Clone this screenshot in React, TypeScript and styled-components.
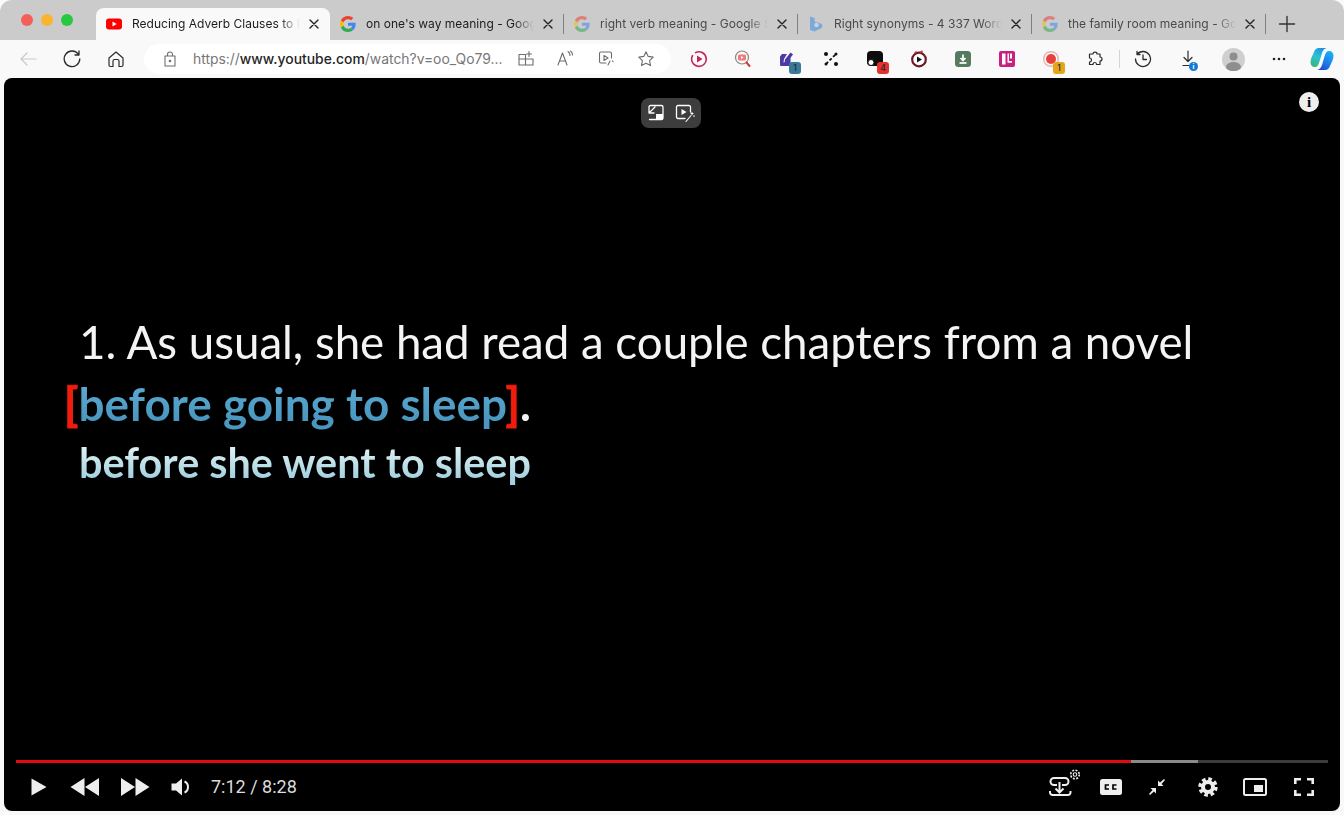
import type { ReactNode } from 'react';
import styled, { createGlobalStyle } from 'styled-components';

const GlobalStyle = createGlobalStyle`
  html, body { margin: 0; padding: 0; background: #fafafa; }
  body { font-family: Inter, "Liberation Sans", sans-serif; overflow: hidden; }
  * { box-sizing: border-box; }
`;

const Window = styled.div`
  width: 1344px;
  height: 815px;
  display: flex;
  flex-direction: column;
  background: #f9f9f9;
  border-radius: 12px 12px 0 0;
  overflow: hidden;
`;

// Tab strip
const TabStrip = styled.div`
  position: relative;
  height: 40px;
  flex: none;
  display: flex;
  align-items: flex-end;
  background: #cbcbcb;
  padding-left: 96px;
`;

const Tab = styled.div<{ $active?: boolean; $sep?: boolean }>`
  position: relative;
  width: 234px;
  height: 32px;
  display: flex;
  align-items: center;
  padding: 0 8px 0 10px;
  border-radius: 8px 8px 0 0;
  background: ${(p) => (p.$active ? '#f9f9f9' : 'transparent')};

  &::after {
    content: '';
    display: ${(p) => (p.$sep ? 'block' : 'none')};
    position: absolute;
    right: 0;
    top: 6px;
    width: 1px;
    height: 20px;
    background: #808080;
  }
`;

const Favicon = styled.span<{ $dim?: boolean }>`
  width: 16px;
  height: 16px;
  flex: none;
  display: flex;
  opacity: ${(p) => (p.$dim ? 0.55 : 1)};
`;

const TabTitle = styled.span<{ $dim?: boolean }>`
  flex: 1;
  min-width: 0;
  margin: 0 6px 0 10px;
  font-size: 12px;
  letter-spacing: 0.02px;
  line-height: 16px;
  white-space: nowrap;
  overflow: hidden;
  color: ${(p) => (p.$dim ? '#4a4a4a' : '#1c1c1c')};
  mask-image: linear-gradient(90deg, #000 88%, transparent 100%);
`;

const TabClose = styled.span`
  width: 16px;
  height: 16px;
  flex: none;
  display: flex;
  align-items: center;
  justify-content: center;
  color: #222;
`;

const NewTab = styled.div`
  width: 42px;
  height: 32px;
  display: flex;
  align-items: center;
  justify-content: center;
  color: #333;
`;

const Lights = styled.div`
  position: absolute;
  left: 21px;
  top: 14px;
  display: flex;
  gap: 8px;
`;

const Light = styled.span<{ $color: string }>`
  width: 12px;
  height: 12px;
  border-radius: 50%;
  background: ${(p) => p.$color};
`;

// Toolbar
const Toolbar = styled.div`
  height: 38px;
  flex: none;
  display: flex;
  align-items: center;
  padding-left: 6px;
  background: #f9f9f9;
`;

const Slot = styled.div<{ $left?: number; $muted?: boolean }>`
  position: relative;
  width: 44px;
  height: 30px;
  flex: none;
  margin-left: ${(p) => p.$left ?? 0}px;
  display: flex;
  align-items: center;
  justify-content: center;
  color: ${(p) => (p.$muted ? '#c9c9c9' : '#2b2b2b')};
`;

const Divider = styled.span`
  width: 1px;
  height: 18px;
  margin: 0 1px 0 2px;
  flex: none;
  background: #d4d4d4;
`;

const UrlPill = styled.div`
  width: 527px;
  height: 30px;
  flex: none;
  margin: 0 6px;
  display: flex;
  align-items: center;
  padding-left: 18px;
  border-radius: 15px;
  background: #fff;
  color: #6d6d6d;
`;

const UrlText = styled.div`
  width: 311px;
  margin-left: 15px;
  font-size: 13.9px;
  line-height: 18px;
  white-space: nowrap;
  color: #777;

  b {
    font-weight: 500;
    color: #262626;
  }
`;

const UrlActions = styled.div`
  display: flex;
  margin-left: 2px;
`;

const UrlAction = styled.span`
  width: 40px;
  display: flex;
  justify-content: center;
`;

const Badge = styled.span<{ $bg: string }>`
  position: absolute;
  left: 24px;
  top: 18px;
  width: 12px;
  height: 12px;
  border-radius: 3px;
  background: ${(p) => p.$bg};
  color: #1c2c33;
  font: 500 8.5px/12px Inter, sans-serif;
  text-align: center;
`;

const InfoDot = styled.span`
  position: absolute;
  left: 22px;
  top: 18px;
  width: 9px;
  height: 9px;
  border-radius: 50%;
  background: #1479d6;
  color: #fff;
  font: 700 7px/9px Inter, sans-serif;
  text-align: center;
`;

const Avatar = styled.span`
  width: 23px;
  height: 23px;
  border-radius: 50%;
  overflow: hidden;
  display: flex;
  background: #cfcfcf;
`;

// Player
const Player = styled.div`
  position: relative;
  flex: none;
  width: 1336px;
  height: 733px;
  margin: 0 4px;
  display: flex;
  flex-direction: column;
  border-radius: 8px;
  background: #000;
  overflow: hidden;
`;

const PipPill = styled.div`
  position: absolute;
  left: 637px;
  top: 20px;
  width: 60px;
  height: 30px;
  display: flex;
  align-items: center;
  gap: 10px;
  padding-left: 6px;
  border-radius: 8px;
  background: #3d3d3d;
  color: #fff;
`;

const InfoButton = styled.div`
  position: absolute;
  left: 1295px;
  top: 14px;
  width: 20px;
  height: 20px;
  border-radius: 50%;
  background: #eee;
  color: #000;
  font: 700 15px/20px "Liberation Serif", serif;
  text-align: center;
`;

const Slide = styled.div`
  flex: 1;
  min-height: 0;
  padding: 235px 0 0 60px;
  font-family: Lato, "Open Sans", sans-serif;
  filter: blur(0.35px);
`;

const SlideLine = styled.div`
  padding-left: 15px;
  font-size: 45.65px;
  line-height: 58px;
  color: #f4f4f4;
  white-space: nowrap;
`;

const ClauseLine = styled.div`
  margin-top: 4px;
  font-size: 45.9px;
  line-height: 58px;
  font-weight: 700;
  white-space: nowrap;
  color: #f4f4f4;
`;

const Bracket = styled.span`
  color: #f01c0c;
  -webkit-text-stroke: 1px #f01c0c;
`;

const Clause = styled.span`
  background: linear-gradient(180deg, #5aa9d0 20%, #4a97c0 80%);
  -webkit-background-clip: text;
  background-clip: text;
  color: transparent;
`;

const RewriteLine = styled.div`
  width: 560px;
  margin-top: 3px;
  padding-left: 15px;
  font-size: 41.4px;
  line-height: 52px;
  font-weight: 700;
  white-space: nowrap;
  background: linear-gradient(180deg, #dbeff2 25%, #a5d2e0 80%);
  -webkit-background-clip: text;
  background-clip: text;
  color: transparent;
`;

const Progress = styled.div`
  flex: none;
  height: 3px;
  margin: 0 12px;
  display: flex;
`;

const Segment = styled.span<{ $pct: number; $color: string }>`
  width: ${(p) => p.$pct}%;
  background: ${(p) => p.$color};
`;

const Controls = styled.div`
  flex: none;
  height: 48px;
  padding: 0 12px;
  display: flex;
  align-items: center;
  color: #eee;
`;

const CtrlButton = styled.div<{ $w: number }>`
  width: ${(p) => p.$w}px;
  height: 48px;
  flex: none;
  display: flex;
  align-items: center;
  justify-content: center;
`;

const RaisedIcon = styled.svg`
  margin-top: -8px;
`;

const TimeLabel = styled.span`
  margin-left: 11px;
  flex: 1;
  font: 400 18px/24px Roboto, sans-serif;
  color: #ddd;
`;

function Icon({ w = 20, h = 20, children }: { w?: number; h?: number; children: ReactNode }) {
  return (
    <svg width={w} height={h} viewBox={`0 0 ${w} ${h}`} fill="none" stroke="currentColor" strokeWidth="1.4" strokeLinecap="round" strokeLinejoin="round">
      {children}
    </svg>
  );
}

const GoogleG = () => (
  <svg width="16" height="16" viewBox="0 0 48 48">
    <path fill="#EA4335" d="M24 9.5c3.9 0 6.9 1.6 9.1 3.6l6.8-6.8C35.700 2.500 30.400 0 24 0 14.600 0 6.500 5.400 2.600 13.200l7.900 6.100C12.400 13.600 17.700 9.500 24 9.500z" />
    <path fill="#4285F4" d="M46.900 24.500c0-1.600-.1-3.100-.4-4.500H24v9h12.900c-.6 3-2.200 5.500-4.700 7.200l7.600 5.900c4.400-4.100 7.100-10.200 7.100-17.600z" />
    <path fill="#FBBC05" d="M10.500 28.700c-.5-1.500-.8-3-.8-4.700s.3-3.200.8-4.700l-7.900-6.100C.9 16.500 0 20.100 0 24s.9 7.500 2.600 10.800l7.900-6.100z" />
    <path fill="#34A853" d="M24 48c6.500 0 11.900-2.100 15.800-5.800l-7.600-5.900c-2.100 1.400-4.900 2.300-8.200 2.300-6.300 0-11.600-4.100-13.500-9.800l-7.900 6.100C6.500 42.600 14.600 48 24 48z" />
  </svg>
);

const YouTubeFav = () => (
  <svg width="16" height="16" viewBox="0 0 16 16">
    <rect y="2.500" width="16" height="11" rx="3" fill="#f00" />
    <path d="M6.500 5.500v5l4.200-2.500z" fill="#fff" />
  </svg>
);

const BingFav = () => (
  <svg width="16" height="16" viewBox="0 0 16 16">
    <path d="M2 0.500 6.500 2v3.500l5 1.500c2 .6 3 1.500 3 3 0 1.300-.7 2-1.700 2.600L6.500 15.500 2 14z" fill="#3f8fe6" />
    <circle cx="8.500" cy="9" r="2.200" fill="#cbd9e8" />
  </svg>
);

const Close = () => (
  <Icon w={10} h={10}>
    <path d="M1 1l8 8M9 1l-8 8" />
  </Icon>
);

const tabs = [
  { title: 'Reducing Adverb Clauses to Participle Phrases', icon: <YouTubeFav />, active: true },
  { title: "on one's way meaning - Google Search", icon: <GoogleG />, sep: true },
  { title: 'right verb meaning - Google Search', icon: <GoogleG />, dim: true, sep: true },
  { title: 'Right synonyms - 4 337 Words and Phrases', icon: <BingFav />, dim: true, sep: true },
  { title: 'the family room meaning - Google Search', icon: <GoogleG />, dim: true, sep: true },
];

const extensions: { badge?: string; bg?: string; icon: ReactNode }[] = [
  {
    icon: (
      <svg width="18" height="18" viewBox="0 0 18 18" fill="none">
        <path d="M5.500 2.600a7.300 7.300 0 1 1-3 3" stroke="#c2255c" strokeWidth="1.600" strokeLinecap="round" />
        <path d="M7 5.500v7l5.500-3.500z" fill="#c2255c" />
      </svg>
    ),
  },
  {
    icon: (
      <svg width="18" height="18" viewBox="0 0 18 18" fill="none">
        <circle cx="8" cy="7.500" r="6.500" stroke="#8d8580" strokeWidth="1.200" />
        <rect x="4" y="4.500" width="8" height="6" rx="1.500" fill="#ee7b78" />
        <path d="M7 6v3l2.500-1.500z" fill="#fff" />
        <path d="M12.500 12.500l3 3.500" stroke="#d33a3a" strokeWidth="2" strokeLinecap="round" />
      </svg>
    ),
  },
  {
    badge: '1',
    bg: '#3a7a96',
    icon: (
      <svg width="18" height="18" viewBox="0 0 18 18">
        <path d="M2 6.500 4 4h5L6 9l-.5 3.500 3-1 4-5V15a1 1 0 0 1-1 1H3a1 1 0 0 1-1-1z" fill="#4b3aa6" />
        <path d="M7 9.500l5.500-7 2.500 2-5.500 7-3 1z" fill="#4b3aa6" />
      </svg>
    ),
  },
  {
    icon: (
      <svg width="16" height="16" viewBox="0 0 16 16" fill="none">
        <path d="M3 13 13 3" stroke="#111" strokeWidth="1.800" strokeDasharray="3 2" />
        <circle cx="3" cy="3" r="2" fill="#111" />
        <circle cx="13" cy="13" r="2" fill="#111" />
        <circle cx="13" cy="3" r="1.500" fill="#111" />
        <circle cx="3" cy="13" r="1.500" fill="#111" />
      </svg>
    ),
  },
  {
    badge: '4',
    bg: '#e5302e',
    icon: (
      <svg width="18" height="18" viewBox="0 0 18 18">
        <rect x="1" y="1" width="16" height="15" rx="4" fill="#0c0c0c" />
        <circle cx="5" cy="12.500" r="3" fill="#fff" stroke="#111" />
      </svg>
    ),
  },
  {
    icon: (
      <svg width="18" height="18" viewBox="0 0 18 18" fill="none">
        <circle cx="9" cy="9.500" r="6.800" fill="#fff" stroke="#6d1a24" strokeWidth="2.200" />
        <path d="M4.500 3.500l2-2M10 2.500l2.500-1.500" stroke="#c63a3a" strokeWidth="1.500" />
        <path d="M7 6.500v6l5-3z" fill="#111" />
      </svg>
    ),
  },
  {
    icon: (
      <svg width="16" height="16" viewBox="0 0 16 16" fill="none">
        <rect width="16" height="16" rx="3.500" fill="#557a5e" />
        <path d="M8 3.500v5.500M5.500 7l2.500 2.500L10.500 7" stroke="#fff" strokeWidth="1.700" />
        <path d="M4.500 12h7" stroke="#fff" strokeWidth="1.700" />
      </svg>
    ),
  },
  {
    icon: (
      <svg width="16" height="16" viewBox="0 0 16 16">
        <rect width="16" height="16" rx="2" fill="#c92080" />
        <path d="M3 2.500h3.500v11H3zM8.500 2.500H10v7.500h3v1.800H8.500zM11 2.500h2v5h-2z" fill="#fff" />
      </svg>
    ),
  },
  {
    badge: '1',
    bg: '#e5a51a',
    icon: (
      <svg width="18" height="18" viewBox="0 0 18 18" fill="none">
        <circle cx="9" cy="9" r="7.300" stroke="#e4b4b0" strokeWidth="1.400" />
        <circle cx="9" cy="9" r="5" fill="#e93f3f" />
      </svg>
    ),
  },
];

const AddressIcons = () => (
  <UrlActions>
    <UrlAction>
      <Icon w={16} h={16}>
        <path d="M1 4.500h6.500V15H1zM7.500 9H15v6H7.500zM1 9h6.500M11 1.500v5M8.500 4h5" strokeWidth="1.100" />
      </Icon>
    </UrlAction>
    <UrlAction>
      <Icon w={18} h={16}>
        <path d="M1 15 5.500 3 10 15M2.700 11h5.600M11 1.500c1.500 1 2 2.500 2 4M13.500 1c1.500 1 2 2.500 2 4" strokeWidth="1.100" />
      </Icon>
    </UrlAction>
    <UrlAction>
      <Icon w={17} h={17}>
        <path d="M8 13H3a1.500 1.500 0 0 1-1.500-1.500v-8A1.500 1.500 0 0 1 3 2h9a1.500 1.500 0 0 1 1.500 1.500V8M6 5.500v5l4-2.500zM12 11l-2 4M14.500 11l.5.5" strokeWidth="1.100" />
      </Icon>
    </UrlAction>
    <UrlAction>
      <Icon w={18} h={18}>
        <path d="M9 1.800l2.200 4.600 5 .7-3.600 3.500.9 5L9 13.200l-4.500 2.400.9-5L1.800 7.100l5-.7z" strokeWidth="1.100" />
      </Icon>
    </UrlAction>
  </UrlActions>
);

export default function App() {
  return (
    <>
      <GlobalStyle />
      <Window>
        <TabStrip>
          <Lights>
            <Light $color="#f45f58" />
            <Light $color="#f9b52e" />
            <Light $color="#28c840" />
          </Lights>
          {tabs.map((t) => (
            <Tab key={t.title} $active={t.active} $sep={t.sep}>
              <Favicon $dim={t.dim}>{t.icon}</Favicon>
              <TabTitle $dim={t.dim}>{t.title}</TabTitle>
              <TabClose>
                <Close />
              </TabClose>
            </Tab>
          ))}
          <NewTab>
            <Icon w={18} h={18}>
              <path d="M9 1.500v15M1.500 9h15" />
            </Icon>
          </NewTab>
        </TabStrip>

        <Toolbar>
          <Slot $muted>
            <Icon w={18} h={18}>
              <path d="M17 9H2M8 3 2 9l6 6" strokeWidth="1.200" />
            </Icon>
          </Slot>
          <Slot>
            <Icon w={18} h={18}>
              <path d="M15.500 4.500A7.800 7.800 0 1 0 16.800 9M16 1v4h-4" strokeWidth="1.300" />
            </Icon>
          </Slot>
          <Slot>
            <Icon w={18} h={18}>
              <path d="M2 8 9 2l7 6v7a1.500 1.500 0 0 1-1.500 1.500H12V11a1.500 1.500 0 0 0-1.500-1.500h-3A1.500 1.500 0 0 0 6 11v5.500H3.500A1.500 1.500 0 0 1 2 15z" strokeWidth="1.200" />
            </Icon>
          </Slot>
          <UrlPill>
            <Icon w={16} h={16}>
              <path d="M5.500 5V3.500a2.500 2.500 0 0 1 5 0V5M3 5h10v10H3z" strokeWidth="1.100" />
              <circle cx="8" cy="10" r=".6" fill="currentColor" />
            </Icon>
            <UrlText>
              https://<b>www.youtube.com</b>/watch?v=oo_Qo79...
            </UrlText>
            <AddressIcons />
          </UrlPill>
          {extensions.map((e, i) => (
            <Slot key={i}>
              {e.icon}
              {e.badge && <Badge $bg={e.bg ?? '#333'}>{e.badge}</Badge>}
            </Slot>
          ))}
          <Slot>
            <Icon w={16} h={16}>
              <path d="M8 1.200c1.300 0 2 .8 2 1.800h3v3c1.500 0 2 1 2 2s-.7 2-2 2v3.500H9.500c0-1.300-.5-2-1.500-2s-2 .7-2 2H2.500V11c1.300 0 2-.9 2-2s-.9-2-2-2V3H6c0-1 .7-1.800 2-1.800z" strokeWidth="1.200" />
            </Icon>
          </Slot>
          <Divider />
          <Slot>
            <Icon w={18} h={18}>
              <path d="M3 4.500A7.500 7.500 0 1 1 1.500 9M3 1.500v3h3M9 5v4.500h3.500" strokeWidth="1.300" />
            </Icon>
          </Slot>
          <Slot $left={2}>
            <Icon w={18} h={18}>
              <path d="M8 1v10M4 7.500 8 11.500l4-4M3 15.500h6" strokeWidth="1.200" />
            </Icon>
            <InfoDot>i</InfoDot>
          </Slot>
          <Slot>
            <Avatar>
              <svg width="23" height="23" viewBox="0 0 23 23">
                <circle cx="11.500" cy="8.500" r="4" fill="#8e8e8e" />
                <ellipse cx="11.500" cy="19" rx="7.500" ry="5" fill="#8e8e8e" />
              </svg>
            </Avatar>
          </Slot>
          <Slot $left={2}>
            <svg width="14" height="4" viewBox="0 0 14 4" fill="#222">
              <circle cx="2" cy="2" r="1.300" />
              <circle cx="7" cy="2" r="1.300" />
              <circle cx="12" cy="2" r="1.300" />
            </svg>
          </Slot>
          <Slot $left={-1}>
            <svg width="24" height="24" viewBox="0 0 24 24">
              <defs>
                <linearGradient id="cpA" x1="0.700" y1="0" x2="0.200" y2="1">
                  <stop offset="0" stopColor="#1f8fe8" />
                  <stop offset="0.500" stopColor="#2cc4d0" />
                  <stop offset="1" stopColor="#38b27a" />
                </linearGradient>
                <linearGradient id="cpB" x1="0.800" y1="0" x2="0.200" y2="1">
                  <stop offset="0" stopColor="#18b4f2" />
                  <stop offset="0.600" stopColor="#1f78ea" />
                  <stop offset="1" stopColor="#1a45d0" />
                </linearGradient>
              </defs>
              <path d="M9 1h8c-2.500.5-4 2-5 5l-2.500 8.500C8.500 18 7.500 20 5 20c-3 0-4.500-2-4.500-5 0-1.500.5-3 1-4.500L4 5C5 2.500 6.500 1 9 1z" fill="url(#cpA)" />
              <path d="M15 23H7c2.500-.5 4-2 5-5l2.500-8.500C15.500 6 16.500 4 19 4c3 0 4.500 2 4.500 5 0 1.500-.5 3-1 4.500L20 19c-1 2.500-2.500 4-5 4z" fill="url(#cpB)" />
            </svg>
          </Slot>
        </Toolbar>

        <Player>
          <PipPill>
            <Icon w={18} h={18}>
              <path d="M2 6V3a1.500 1.500 0 0 1 1.500-1.500h11A1.500 1.500 0 0 1 16 3v11a1.500 1.500 0 0 1-1.500 1.500H2.500M8 3 2.500 8.500M7 9H2V4" strokeWidth="1.300" />
              <rect x="9" y="10" width="7" height="5.500" fill="currentColor" stroke="none" />
            </Icon>
            <Icon w={20} h={20}>
              <path d="M10 15.500H3A1.500 1.500 0 0 1 1.500 14V4A1.500 1.500 0 0 1 3 2.500h11A1.500 1.500 0 0 1 15.500 4v5" strokeWidth="1.300" />
              <path d="M6.500 6v6l5-3z" fill="currentColor" stroke="none" />
              <path d="M11 18.500l5-6M17 9.500v2M16 10.500h2M18.500 13h1" strokeWidth="1.100" />
            </Icon>
          </PipPill>
          <InfoButton>i</InfoButton>

          <Slide>
            <SlideLine>1. As usual, she had read a couple chapters from a novel</SlideLine>
            <ClauseLine>
              <Bracket>[</Bracket>
              <Clause>before going to sleep</Clause>
              <Bracket>]</Bracket>.
            </ClauseLine>
            <RewriteLine>before she went to sleep</RewriteLine>
          </Slide>

          <Progress>
            <Segment $pct={85} $color="#e50914" />
            <Segment $pct={5.1} $color="#8a8a8a" />
            <Segment $pct={9.9} $color="#3c3c3c" />
          </Progress>

          <Controls>
            <CtrlButton $w={46}>
              <svg width="16" height="18" viewBox="0 0 16 18" fill="currentColor">
                <path d="M0.500 0.500 15.500 9 .5 17.500z" />
              </svg>
            </CtrlButton>
            <CtrlButton $w={46}>
              <svg width="30" height="18" viewBox="0 0 30 18" fill="currentColor">
                <path d="M14.500 0v18L0.500 9zM29 0v18L15 9z" />
              </svg>
            </CtrlButton>
            <CtrlButton $w={54}>
              <svg width="30" height="18" viewBox="0 0 30 18" fill="currentColor">
                <path d="M1 0v18l14-9zM15.500 0v18l14-9z" />
              </svg>
            </CtrlButton>
            <CtrlButton $w={38}>
              <svg width="20" height="18" viewBox="0 0 20 18" fill="currentColor">
                <path d="M0.500 5.500H5L11 0.500v17l-6-5H0.500z" />
                <path d="M13.500 3.500c2.500 1 3.500 3.200 3.500 5.500s-1 4.500-3.500 5.500" fill="none" stroke="currentColor" strokeWidth="2" />
              </svg>
            </CtrlButton>
            <TimeLabel>7:12 / 8:28</TimeLabel>

            <CtrlButton $w={68}>
              <RaisedIcon width="42" height="28" viewBox="0 0 42 28" fill="none" stroke="currentColor" strokeWidth="2">
                <path d="M18 16h-3a3.500 3.500 0 0 1 0-7h11a3.500 3.500 0 0 1 0 7h-3" />
                <path d="M20.500 13v10M16.500 19.500l4 4 4-4" />
                <path d="M11 22v1.500A2.500 2.500 0 0 0 13.500 26h15.500a2.500 2.500 0 0 0 2.500-2.500V22" />
                <circle cx="36" cy="5.500" r="1.800" strokeWidth="1.100" />
                <circle cx="36" cy="5.500" r="4.300" strokeWidth="1.600" strokeDasharray="2 1.370" />
              </RaisedIcon>
            </CtrlButton>
            <CtrlButton $w={34}>
              <svg width="22" height="16" viewBox="0 0 22 16">
                <rect width="22" height="16" rx="2.500" fill="currentColor" />
                <path d="M9 6H5.500v4H9M16.500 6H13v4h3.500" fill="none" stroke="#000" strokeWidth="1.700" />
              </svg>
            </CtrlButton>
            <CtrlButton $w={58}>
              <svg width="18" height="18" viewBox="0 0 18 18" fill="currentColor">
                <path d="M10 8V2.500l2 2L16 1l1 1-3.500 4 2 2zM8 10v5.500l-2-2L2 17l-1-1 3.500-4-2-2z" />
              </svg>
            </CtrlButton>
            <CtrlButton $w={44}>
              <svg width="20" height="20" viewBox="0 0 20 20" fill="none" stroke="currentColor">
                <circle cx="10" cy="10" r="5" strokeWidth="4" />
                <circle cx="10" cy="10" r="8" strokeWidth="3.400" strokeDasharray="3.600 2.680" />
              </svg>
            </CtrlButton>
            <CtrlButton $w={50}>
              <svg width="24" height="18" viewBox="0 0 24 18">
                <rect x="1" y="1" width="22" height="16" rx="1.500" fill="none" stroke="currentColor" strokeWidth="2" />
                <rect x="11" y="7" width="9" height="7" fill="currentColor" />
              </svg>
            </CtrlButton>
            <CtrlButton $w={48}>
              <svg width="20" height="18" viewBox="0 0 20 18" fill="none" stroke="currentColor" strokeWidth="2.600">
                <path d="M1.300 6V1.300H7M13 1.300h5.700V6M18.700 12v4.700H13M7 16.700H1.300V12" />
              </svg>
            </CtrlButton>
          </Controls>
        </Player>
      </Window>
    </>
  );
}
